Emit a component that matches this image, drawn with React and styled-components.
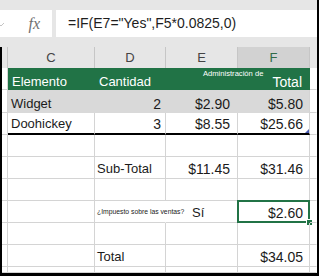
import React from 'react';
import styled, { createGlobalStyle } from 'styled-components';

const GREEN = '#217346';
const GRID = '#d4d4d4';
const COLS = '6px 87px 71px 72px 72px 1fr';

const GlobalStyle = createGlobalStyle`
  html, body {
    margin: 0;
    padding: 0;
    background: #fff;
  }
  body {
    font-family: "Liberation Sans", Arial, sans-serif;
  }
`

const Frame = styled.div`
  width: 319px;
  height: 276px;
  box-sizing: border-box;
  border-right: 2px solid #000;
  display: flex;
  flex-direction: column;
  overflow: hidden;
  background: #fff;
`

const FormulaBar = styled.div`
  flex: none;
  height: 47px;
  box-sizing: border-box;
  padding-top: 10px;
  background: #e6e6e6;
  display: flex;
  align-items: flex-start;
  gap: 4px;
`

const NameBox = styled.div`
  width: 52px;
  height: 27px;
  box-sizing: border-box;
  padding-right: 12px;
  background: #fff;
  display: flex;
  align-items: center;
  justify-content: space-between;
`

const Fx = styled.span`
  font-family: "Liberation Serif", "Times New Roman", serif;
  font-style: italic;
  font-size: 16px;
  color: #707070;
`

const FormulaInput = styled.div`
  flex: 1;
  height: 27px;
  padding-left: 12px;
  background: #fff;
  font-size: 14px;
  line-height: 27px;
  color: #1e1e1e;
  white-space: nowrap;
  overflow: hidden;
`

const Sheet = styled.div`
  flex: 1;
  border-left: 2px solid #000;
  border-bottom: 3px solid #000;
  overflow: hidden;
`

const Row = styled.div`
  display: grid;
  grid-template-columns: ${COLS};
  height: ${p => p.$h}px;
`

const ColHead = styled.div`
  box-sizing: border-box;
  display: flex;
  align-items: center;
  justify-content: center;
  background: ${p => (p.$active ? '#d2d2d2' : '#e6e6e6')};
  color: ${p => (p.$active ? '#2f6b48' : '#444')};
  border-right: 1px solid ${p => (p.$last ? 'transparent' : '#c6c6c6')};
  font-size: 13px;
`

const Cell = styled.div`
  position: relative;
  box-sizing: border-box;
  display: flex;
  align-items: flex-end;
  justify-content: ${p => (p.$right ? 'flex-end' : 'flex-start')};
  padding: 0 ${p => p.$pr || 0}px 1px ${p => p.$pl || 0}px;
  background: ${p => p.$bg || 'transparent'};
  border-right: 1px solid ${p => (p.$noLine ? 'transparent' : GRID)};
  border-bottom: ${p => (p.$thick ? '2px solid #000' : p.$noBottom ? 'none' : `1px solid ${GRID}`)};
  font-size: 13px;
  line-height: 16px;
  color: #1b1b1b;
  white-space: nowrap;
`

const Num = styled(Cell)`
  font-size: 14px;
`

const HeadCell = styled(Cell)`
  background: ${GREEN};
  color: #fff;
  border-right-color: transparent;
  border-bottom: none;
  padding-bottom: 0;
  font-size: ${p => p.$fs || 13}px;
`

const Caption = styled.span`
  position: relative;
  z-index: 1;
  align-self: flex-start;
  margin-top: 1px;
  font-size: 7.6px;
  line-height: 9px;
  color: #fff;
`

const Tiny = styled.span`
  position: relative;
  z-index: 1;
  align-self: center;
  font-size: 6.8px;
  line-height: 9px;
  color: #222;
`

const Selection = styled.div`
  position: absolute;
  left: -1px;
  top: -1px;
  right: -1px;
  bottom: -1px;
  border: 2px solid ${GREEN};
  pointer-events: none;
`

const Handle = styled.div`
  position: absolute;
  right: -4px;
  bottom: -4px;
  width: 5px;
  height: 5px;
  background: ${GREEN};
  border: 1px solid #fff;
`

const ResizeMark = styled.svg`
  position: absolute;
  right: 0;
  bottom: 0;
`

const Gutter = () => <Cell />;
const Spare = () => <Cell $noLine />;

function EmptyRow({ h = 22 }) {
  return (
    <Row $h={h}>
      <Gutter />
      <Cell />
      <Cell />
      <Cell />
      <Cell />
      <Spare />
    </Row>
  );
}

export default function App() {
  return (
    <Frame>
      <GlobalStyle />
      <FormulaBar>
        <NameBox>
          <svg width="6" height="8" viewBox="0 0 6 8">
            <polyline points="-2,3 1,6 4,3" fill="none" stroke="#c4c4c4" strokeWidth="1" />
          </svg>
          <Fx>fx</Fx>
        </NameBox>
        <FormulaInput>=IF(E7="Yes",F5*0.0825,0)</FormulaInput>
      </FormulaBar>

      <Sheet>
        <Row $h={21}>
          <ColHead />
          <ColHead>C</ColHead>
          <ColHead>D</ColHead>
          <ColHead>E</ColHead>
          <ColHead $active>F</ColHead>
          <ColHead $last />
        </Row>

        <Row $h={22}>
          <Gutter />
          <HeadCell $pl={4}>Elemento</HeadCell>
          <HeadCell $pl={4}>Cantidad</HeadCell>
          <HeadCell $pl={37}><Caption>Administración de</Caption></HeadCell>
          <HeadCell $right $pr={7} $fs={14}>Total</HeadCell>
          <Spare />
        </Row>

        <Row $h={23}>
          <Gutter />
          <Cell $bg="#d9d9d9" $noLine $noBottom $pl={3}>Widget</Cell>
          <Num $bg="#d9d9d9" $noLine $noBottom $right $pr={4}>2</Num>
          <Num $bg="#d9d9d9" $noLine $noBottom $right $pr={7}>$2.90</Num>
          <Num $bg="#d9d9d9" $noBottom $right $pr={6}>$5.80</Num>
          <Spare />
        </Row>

        <Row $h={22}>
          <Gutter />
          <Cell $thick $pl={3}>Doohickey</Cell>
          <Num $thick $right $pr={4}>3</Num>
          <Num $thick $right $pr={7}>$8.55</Num>
          <Num $thick $right $pr={6}>
            $25.66
            <ResizeMark width="4" height="4" viewBox="0 0 4 4">
              <polygon points="4,0 4,4 0,4" fill="#4a5bb0" />
            </ResizeMark>
          </Num>
          <Spare />
        </Row>

        <EmptyRow />

        <Row $h={22}>
          <Gutter />
          <Cell />
          <Cell $pl={2}>Sub-Total</Cell>
          <Num $right $pr={7}>$11.45</Num>
          <Num $right $pr={6}>$31.46</Num>
          <Spare />
        </Row>

        <EmptyRow />

        <Row $h={22}>
          <Gutter />
          <Cell />
          <Cell $noLine $pl={2}><Tiny>¿Impuesto sobre las ventas?</Tiny></Cell>
          <Cell $pl={26}>Sí</Cell>
          <Num $right $pr={6}>
            $2.60
            <Selection />
            <Handle />
          </Num>
          <Spare />
        </Row>

        <EmptyRow />

        <Row $h={22}>
          <Gutter />
          <Cell />
          <Cell $pl={2}>Total</Cell>
          <Cell />
          <Num $right $pr={6}>$34.05</Num>
          <Spare />
        </Row>

        <EmptyRow h={6} />
      </Sheet>
    </Frame>
  );
}
